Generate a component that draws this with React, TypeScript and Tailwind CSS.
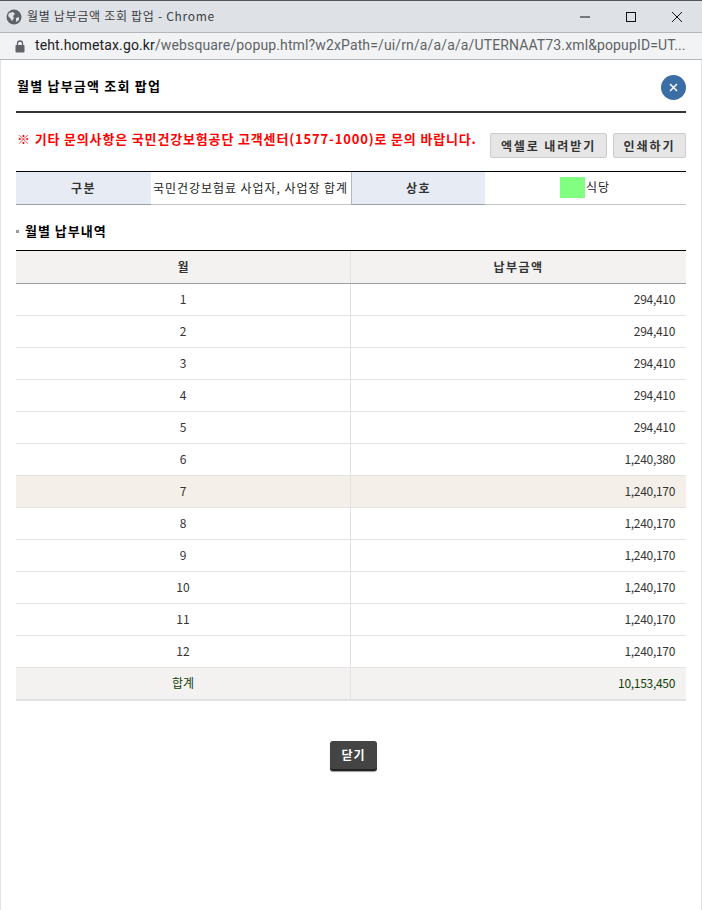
import React from "react";

const FONT = "font-['Noto_Sans_CJK_KR','Liberation_Sans',sans-serif]";

const rows = [
    { month: "1", amount: "294,410" },
    { month: "2", amount: "294,410" },
    { month: "3", amount: "294,410" },
    { month: "4", amount: "294,410" },
    { month: "5", amount: "294,410" },
    { month: "6", amount: "1,240,380" },
    { month: "7", amount: "1,240,170" },
    { month: "8", amount: "1,240,170" },
    { month: "9", amount: "1,240,170" },
    { month: "10", amount: "1,240,170" },
    { month: "11", amount: "1,240,170" },
    { month: "12", amount: "1,240,170" },
];

const App = () => {
    return (
        <div className={`w-[702px] h-[910px] overflow-hidden bg-white flex flex-col ${FONT}`}>
            {/* Chrome title bar */}
            <div className="h-[32px] shrink-0 bg-[#dee1e6] border-t border-[#555] flex items-center pl-[6px]">
                <svg width="16" height="16" viewBox="0 0 16 16" className="shrink-0">
                    <circle cx="8" cy="8" r="7.5" fill="#5f6368" />
                    <path d="M3 4 L7 3 L9 5 L7 7 L8 9 L6 12 L4 9 L2 7 Z M10 9 L13 8 L13 11 L10 13 Z" fill="#dee1e6" />
                </svg>
                <span className="ml-[5px] mb-[1px] text-[12px] text-[#3c4043] tracking-[0.7px]">월별 납부금액 조회 팝업 - Chrome</span>
                <div className="ml-auto flex items-center">
                    <svg width="46" height="30" viewBox="0 0 46 30"><path d="M18 15 H28" stroke="#111" strokeWidth="1" /></svg>
                    <svg width="46" height="30" viewBox="0 0 46 30"><rect x="18.5" y="10.5" width="9" height="9" fill="none" stroke="#111" strokeWidth="1" /></svg>
                    <svg width="46" height="30" viewBox="0 0 46 30" className="mr-[2px]"><path d="M18 10 L28 20 M28 10 L18 20" stroke="#111" strokeWidth="1" /></svg>
                </div>
            </div>
            {/* Address bar */}
            <div className="h-[28px] shrink-0 bg-[#f1f3f4] border-t border-b border-[#b4b6b9] flex items-center pl-[15px]">
                <svg width="10" height="13" viewBox="0 0 10 13" className="shrink-0">
                    <path d="M2.5 5.5 V3.5 a2.5 2.5 0 0 1 5 0 V5.5" fill="none" stroke="#5f6368" strokeWidth="1.3" />
                    <rect x="0.5" y="5" width="9" height="7.5" rx="1" fill="#5f6368" />
                </svg>
                <span className="ml-[10px] mb-[1px] text-[14px] text-[#5f6368] font-['Roboto','Liberation_Sans',sans-serif] whitespace-nowrap tracking-[0.13px]">
                    <span className="text-[#202124]">teht.hometax.go.kr</span>/websquare/popup.html?w2xPath=/ui/rn/a/a/a/a/UTERNAAT73.xml&amp;popupID=UT...
                </span>
            </div>

            {/* Popup body */}
            <div className="flex-1 px-[16px] flex flex-col shadow-[inset_1px_0_0_#e2e4e8,inset_-1px_0_0_#e2e4e8]">
                <div className="h-[53px] shrink-0 flex items-center justify-between border-b-2 border-[#333]">
                    <h1 className="ml-[1px] text-[13px] font-bold text-black tracking-[1.2px]">월별 납부금액 조회 팝업</h1>
                    <button className="w-[25px] h-[25px] mt-[3px] rounded-full bg-[#3a6ea5] flex items-center justify-center">
                        <svg width="9" height="9" viewBox="0 0 9 9"><path d="M1 1 L8 8 M8 1 L1 8" stroke="#fff" strokeWidth="1.5" /></svg>
                    </button>
                </div>

                <div className="h-[58px] shrink-0 flex items-start">
                    <p className="ml-[1px] mt-[16px] text-[13px] leading-[20px] font-bold text-[#ff0000] tracking-[0.84px] whitespace-nowrap">※ 기타 문의사항은 국민건강보험공단 고객센터(1577-1000)로 문의 바랍니다.</p>
                    <div className="ml-auto mt-[20px] flex gap-[6px] shrink-0">
                        <button className="w-[117px] h-[25px] rounded-[2px] border border-[#ccc] bg-[#e6e6e6] text-[12px] font-bold text-[#333] tracking-[1.9px]">엑셀로 내려받기</button>
                        <button className="w-[73px] h-[25px] rounded-[2px] border border-[#ccc] bg-[#e6e6e6] text-[12px] font-bold text-[#333] tracking-[1.9px]">인쇄하기</button>
                    </div>
                </div>

                {/* Info table */}
                <div className="h-[34px] shrink-0 flex border-t border-black text-[12px]">
                    <div className="w-[135px] bg-[#e7ecf4] border-b border-[#a0a0a0] flex items-center justify-center font-bold text-[#333] tracking-[1.5px]">구분</div>
                    <div className="w-[200px] border-b border-[#c4c4c4] flex items-center pl-[2px] text-[#222] whitespace-nowrap tracking-[0.95px]">국민건강보험료 사업자, 사업장 합계</div>
                    <div className="w-[134px] bg-[#e7ecf4] border-b border-l border-[#b0b8c8] border-b-[#a0a0a0] flex items-center justify-center font-bold text-[#333] tracking-[1.5px]">상호</div>
                    <div className="flex-1 border-b border-[#c4c4c4] flex items-center pl-[75px]">
                        <span className="w-[25px] h-[21px] mb-[2px] bg-[#80ff80]" />
                        <span className="ml-[1px] mb-[2px] text-[#222] tracking-[1px]">식당</span>
                    </div>
                </div>

                <div className="h-[45px] shrink-0 flex items-center">
                    <span className="w-[3px] h-[3px] mt-[7px] bg-[#999]" />
                    <h2 className="ml-[6px] mt-[7px] text-[13px] font-bold text-black tracking-[1px]">월별 납부내역</h2>
                </div>

                {/* Monthly table */}
                <div className="border-t border-black text-[12px]">
                    <div className="h-[33px] flex bg-[#f3f2f0] border-b border-[#a0a0a0] font-bold text-[#333]">
                        <div className="w-[335px] border-r border-[#e2e2e2] flex items-center justify-center">월</div>
                        <div className="flex-1 flex items-center justify-center tracking-[1.5px]">납부금액</div>
                    </div>
                    {rows.map((row) => (
                        <div key={row.month} className={`h-[32px] flex border-b border-[#e4e4e4] text-[#333] pb-[2px] ${row.month === "7" ? "bg-[#f4f0e9]" : "bg-white"}`}>
                            <div className="w-[335px] border-r border-[#e2e2e2] -mb-[2px] pb-[2px] flex items-center justify-center">{row.month}</div>
                            <div className="flex-1 flex items-center justify-end pr-[11px] tracking-[-0.3px]">{row.amount}</div>
                        </div>
                    ))}
                    <div className="h-[33px] flex bg-[#f3f2f0] border-b-2 border-[#e2e2e2] text-[#123d0c] pb-[2px]">
                        <div className="w-[335px] border-r border-[#e2e2e2] -mb-[2px] pb-[2px] flex items-center justify-center">합계</div>
                        <div className="flex-1 flex items-center justify-end pr-[11px] tracking-[-0.3px]">10,153,450</div>
                    </div>
                </div>

                <div className="flex justify-center mt-[40px]">
                    <button className="w-[47px] h-[30px] ml-[5px] rounded-[3px] bg-[#444] border-b-2 border-[#222] text-[12px] font-bold text-white tracking-[1px] shadow-[0_1px_1px_#999]">닫기</button>
                </div>
            </div>
        </div>
    );
};

export default App;
